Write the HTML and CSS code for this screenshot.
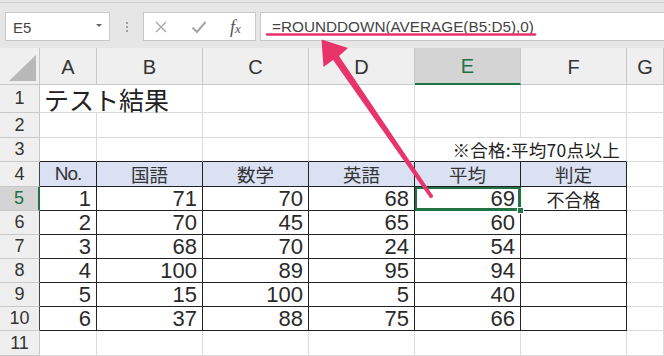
FILE: index.html
```html
<!DOCTYPE html>
<html lang="ja">
<head>
  <meta charset="UTF-8">
  <title>テスト結果</title>
  <link rel="stylesheet" href="styles.css">
</head>
<body>
  <div class="toolbar">
    <div class="namebox"><span>E5</span><i class="caret"></i></div>
    <div class="grip"><i></i><i></i><i></i></div>
    <div class="fxbox">
      <svg width="14" height="14" viewBox="0 0 14 14"><path d="M2 2L12 12M12 2L2 12" stroke="#a8a8a8" stroke-width="1.4" fill="none"/></svg>
      <svg width="16" height="14" viewBox="0 0 16 14"><path d="M1.5 7.5L6 12L14.5 2" stroke="#a8a8a8" stroke-width="2.2" fill="none"/></svg>
      <span class="fx">f<small>x</small></span>
    </div>
    <div class="formula">=ROUNDDOWN(AVERAGE(B5:D5),0)</div>
  </div>

  <div class="sheet">
    <!-- column headers -->
    <div class="ch corner"><svg width="28" height="27" viewBox="0 0 28 27"><polygon points="27,0 27,26 0,26" fill="#b8b8b8"/></svg></div>
    <div class="ch">A</div>
    <div class="ch">B</div>
    <div class="ch">C</div>
    <div class="ch">D</div>
    <div class="ch cur">E</div>
    <div class="ch">F</div>
    <div class="ch">G</div>

    <!-- row 1 -->
    <div class="rh">1</div>
    <div class="title">テスト結果</div>
    <div></div><div></div><div></div><div></div><div></div>

    <!-- row 2 -->
    <div class="rh">2</div>
    <div></div><div></div><div></div><div></div><div></div><div></div><div></div>

    <!-- row 3 -->
    <div class="rh">3</div>
    <div class="above"></div><div class="above"></div><div class="above"></div><div class="above"></div>
    <div class="note above">※合格:平均70点以上</div>
    <div></div>

    <!-- row 4 -->
    <div class="rh edge">4</div>
    <div class="th no">No.</div>
    <div class="th">国語</div>
    <div class="th">数学</div>
    <div class="th">英語</div>
    <div class="th">平均</div>
    <div class="th">判定</div>
    <div></div>

    <!-- row 5 -->
    <div class="rh edge cur">5</div>
    <div class="td num">1</div>
    <div class="td num">71</div>
    <div class="td num">70</div>
    <div class="td num">68</div>
    <div class="td num sel">69</div>
    <div class="td mid">不合格</div>
    <div></div>

    <!-- row 6 -->
    <div class="rh edge">6</div>
    <div class="td num">2</div>
    <div class="td num">70</div>
    <div class="td num">45</div>
    <div class="td num">65</div>
    <div class="td num">60</div>
    <div class="td"></div>
    <div></div>

    <!-- row 7 -->
    <div class="rh edge">7</div>
    <div class="td num">3</div>
    <div class="td num">68</div>
    <div class="td num">70</div>
    <div class="td num">24</div>
    <div class="td num">54</div>
    <div class="td"></div>
    <div></div>

    <!-- row 8 -->
    <div class="rh edge">8</div>
    <div class="td num">4</div>
    <div class="td num">100</div>
    <div class="td num">89</div>
    <div class="td num">95</div>
    <div class="td num">94</div>
    <div class="td"></div>
    <div></div>

    <!-- row 9 -->
    <div class="rh edge">9</div>
    <div class="td num">5</div>
    <div class="td num">15</div>
    <div class="td num">100</div>
    <div class="td num">5</div>
    <div class="td num">40</div>
    <div class="td"></div>
    <div></div>

    <!-- row 10 -->
    <div class="rh edge">10</div>
    <div class="td num">6</div>
    <div class="td num">37</div>
    <div class="td num">88</div>
    <div class="td num">75</div>
    <div class="td num">66</div>
    <div class="td"></div>
    <div></div>

    <!-- row 11 -->
    <div class="rh">11</div>
    <div></div><div></div><div></div><div></div><div></div><div></div><div></div>
  </div>

  <svg class="marks" width="664" height="356" viewBox="0 0 664 356">
    <line x1="267" y1="34.5" x2="535" y2="34.5" stroke="#e8336b" stroke-width="2.5" stroke-linecap="round"/>
    <polygon points="321.5,39.5 348,48 339,56 432.6,194.9 429.4,197.1 333.1,60 323.5,67" fill="#e8336b"/>
    <circle cx="431" cy="196" r="2" fill="#e8336b"/>
  </svg>
</body>
</html>
```

FILE: styles.css
```css
body {
  margin: 0;
  width: 664px;
  height: 356px;
  overflow: hidden;
  position: relative;
  background: #fff;
  color: #222;
  font-family: "Liberation Sans", "Noto Sans CJK JP", sans-serif;
}

/* formula bar */
.toolbar {
  height: 48px;
  box-sizing: border-box;
  padding: 12px 0 7px 5px;
  display: flex;
  background: linear-gradient(#e6e6e6 2px, #d0d0d0 2px, #d0d0d0 3px, #e6e6e6 3px);
}
.namebox {
  width: 105px;
  box-sizing: border-box;
  border: 1px solid #c8c8c8;
  background: #fff;
  display: flex;
  align-items: center;
  justify-content: space-between;
  padding: 2px 7px 0 7px;
  font-size: 15px;
  color: #444;
}
.caret {
  width: 0;
  height: 0;
  border-left: 3px solid transparent;
  border-right: 3px solid transparent;
  border-top: 3px solid #666;
  margin-top: -4px;
}
.grip {
  width: 33px;
  display: flex;
  flex-direction: column;
  align-items: center;
  justify-content: center;
  gap: 2px;
}
.grip i {
  width: 2px;
  height: 2px;
  background: #a0a0a0;
}
.fxbox {
  width: 113px;
  box-sizing: border-box;
  border: 1px solid #c8c8c8;
  background: #fff;
  display: flex;
  align-items: center;
  padding: 1px 0 0 10px;
  gap: 23px;
}
.fx {
  font-family: "Liberation Serif", serif;
  font-style: italic;
  font-size: 18px;
  color: #555;
}
.fx small {
  font-size: 13px;
}
.formula {
  flex: 1;
  margin-left: 4px;
  box-sizing: border-box;
  border: 1px solid #c8c8c8;
  border-right: none;
  background: #fff;
  padding: 5px 0 0 11px;
  font-size: 15.3px;
  color: #444;
}

/* grid */
.sheet {
  display: grid;
  grid-template-columns: 40px 57px repeat(5, 106px) 1fr;
  grid-template-rows: 37px 28px 25px 24px 25px repeat(6, 24px) 25px;
}
.sheet > div {
  box-sizing: border-box;
  border-right: 1px solid #dadada;
  border-bottom: 1px solid #dadada;
  display: flex;
  align-items: center;
  white-space: nowrap;
  position: relative;
}
.ch {
  background: #efefef;
  border-color: #c8c8c8 !important;
  justify-content: center;
  font-size: 20px;
  color: #333;
  padding-top: 2px;
}
.ch.corner {
  justify-content: flex-end;
  align-items: flex-end !important;
  padding: 0 2px 2px 0;
}
.ch.cur {
  background: #d4d4d4;
  color: #217346;
  border-bottom: 2px solid #217346 !important;
}
.rh {
  background: #efefef;
  border-color: #c8c8c8 !important;
  justify-content: center;
  font-size: 18px;
  color: #333;
}
.rh.edge {
  border-right-color: #444 !important;
}
.rh.cur {
  background: #d4d4d4;
  color: #217346;
  border-right: 2px solid #217346 !important;
}
.title {
  grid-column: span 2;
  font-family: "Noto Sans CJK JP", sans-serif;
  font-size: 25px;
  padding-left: 4px;
}
.above {
  border-bottom-color: #222 !important;
}
.note {
  grid-column: span 2;
  justify-content: flex-end;
  padding-right: 6px;
  font-family: "Noto Sans CJK JP", sans-serif;
  font-size: 17.5px;
  letter-spacing: 0.3px;
}
.th {
  background: #d9e1f2;
  border-color: #222 !important;
  justify-content: center;
  font-family: "Noto Sans CJK JP", sans-serif;
  font-size: 18.5px;
  color: #333;
}
.th.no {
  font-family: "Liberation Sans Narrow", "Liberation Sans", sans-serif;
  letter-spacing: -1px;
  font-size: 19px;
}
.td {
  border-color: #222 !important;
}
.num {
  justify-content: flex-end;
  align-items: flex-end !important;
  padding-right: 5px;
  font-size: 22px;
  line-height: 23px;
  color: #2a2a2a;
}
.mid {
  justify-content: center;
  font-family: "Noto Sans CJK JP", sans-serif;
  font-size: 18px;
}
.sel {
  box-shadow: inset 0 0 0 2px #217346;
  border-color: #217346 !important;
}
.sel::after {
  content: "";
  position: absolute;
  right: -4px;
  bottom: -4px;
  width: 5px;
  height: 5px;
  background: #217346;
  border: 1px solid #fff;
  z-index: 2;
}

/* annotation */
.marks {
  position: absolute;
  left: 0;
  top: 0;
  pointer-events: none;
}
```
